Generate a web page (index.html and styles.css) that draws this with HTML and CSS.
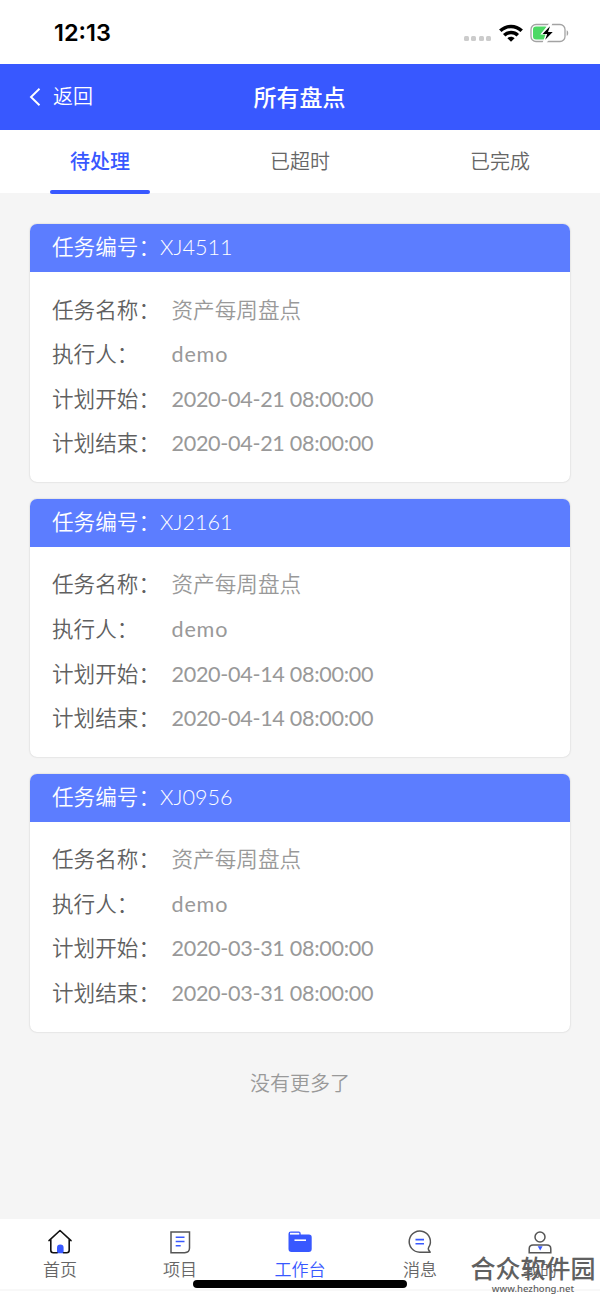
FILE: index.html
```html
<!DOCTYPE html>
<html lang="zh-CN">
<head>
    <meta charset="UTF-8">
    <meta name="viewport" content="width=device-width, initial-scale=1.0">
    <title>所有盘点</title>
    <link rel="stylesheet" href="styles.css">
</head>
<body>
    <div class="status-bar">
        <span class="time">12:13</span>
        <div class="status-icons">
            <div class="signal"><i></i><i></i><i></i><i></i></div>
            <svg class="wifi" width="24" height="18" viewBox="0 0 24 18">
                <g fill="none" stroke="#000" stroke-width="3.5">
                    <path d="M1.3 6.8C7.4.9 16.6.9 22.7 6.8"/>
                    <path d="M5.2 11.3C9 7.6 15 7.6 18.8 11.3"/>
                </g>
                <path d="M8.4 14.2C10.4 12.2 13.6 12.2 15.6 14.2L12 17.7z"/>
            </svg>
            <svg class="battery" width="39" height="20" viewBox="0 0 39 20">
                <rect x="1" y="1.5" width="34" height="17" rx="5" fill="#fff" stroke="#a3a3a3" stroke-width="1.3"/>
                <path d="M36.7 7.2c2 .7 2 4.9 0 5.6z" fill="#a3a3a3"/>
                <rect x="3" y="3.5" width="15" height="13" rx="3" fill="#4cd964"/>
                <path d="M19.5 0L10.3 11.5h5.2L12.5 20h4L25 8.3h-5.5L22.5 0z" fill="#fff"/>
                <path d="M20 3.3L12.5 11h4.7l-2 5.8L22.7 9H18z"/>
            </svg>
        </div>
    </div>

    <div class="header">
        <a class="back" href="#">
            <svg width="12" height="20" viewBox="0 0 12 20"><path d="M10.5 1.8L2 10l8.5 8.2" fill="none" stroke="#fff" stroke-width="1.9"/></svg>
            <span>返回</span>
        </a>
        <h1>所有盘点</h1>
    </div>

    <div class="tabs">
        <div class="tab active">待处理</div>
        <div class="tab">已超时</div>
        <div class="tab">已完成</div>
    </div>

    <div class="content">
        <div class="card">
            <div class="card-title">任务编号：<span class="code">XJ4511</span></div>
            <div class="card-body">
                <div class="row"><label>任务名称：</label><span>资产每周盘点</span></div>
                <div class="row"><label>执行人：</label><span class="demo">demo</span></div>
                <div class="row"><label>计划开始：</label><span class="date">2020-04-21 08:00:00</span></div>
                <div class="row"><label>计划结束：</label><span class="date">2020-04-21 08:00:00</span></div>
            </div>
        </div>
        <div class="card">
            <div class="card-title">任务编号：<span class="code">XJ2161</span></div>
            <div class="card-body">
                <div class="row"><label>任务名称：</label><span>资产每周盘点</span></div>
                <div class="row"><label>执行人：</label><span class="demo">demo</span></div>
                <div class="row"><label>计划开始：</label><span class="date">2020-04-14 08:00:00</span></div>
                <div class="row"><label>计划结束：</label><span class="date">2020-04-14 08:00:00</span></div>
            </div>
        </div>
        <div class="card">
            <div class="card-title">任务编号：<span class="code">XJ0956</span></div>
            <div class="card-body">
                <div class="row"><label>任务名称：</label><span>资产每周盘点</span></div>
                <div class="row"><label>执行人：</label><span class="demo">demo</span></div>
                <div class="row"><label>计划开始：</label><span class="date">2020-03-31 08:00:00</span></div>
                <div class="row"><label>计划结束：</label><span class="date">2020-03-31 08:00:00</span></div>
            </div>
        </div>
        <div class="no-more">没有更多了</div>
    </div>

    <div class="tabbar">
        <a class="item">
            <svg width="26" height="26" viewBox="0 0 26 26">
                <path d="M10 24.3v-5.5a3.3 3.3 0 0 1 6.6 0v5.5z" fill="#3858ff"/>
                <path d="M10 23.8H6.3q-2.5 0-2.5-2.5V10.5L2 11.6 13 1.5l11 10.1-1.8-1.1v10.8q0 2.5-2.5 2.5h-3.1" fill="none" stroke="#111" stroke-width="1.6" stroke-linecap="round" stroke-linejoin="round"/>
            </svg>
            <span>首页</span>
        </a>
        <a class="item">
            <svg width="26" height="26" viewBox="0 0 26 26">
                <path d="M4 2.9h18.5v16.2q0 4.6-4.8 4.6H4z" fill="none" stroke="#555" stroke-width="1.5"/>
                <path d="M8.7 8.2h8.8M8.7 12.5h8.8M8.7 16.7h5" stroke="#3858ff" stroke-width="1.5"/>
            </svg>
            <span>项目</span>
        </a>
        <a class="item active">
            <svg width="26" height="26" viewBox="0 0 26 26">
                <path d="M1.5 4.8q0-2.3 2.3-2.3h8q1.9 0 1.9 1.9v1.2h8.2q2.8 0 2.8 2.8v11.7q0 3-3 3H4.5q-3 0-3-3z" fill="#3858ff"/>
                <rect x="3" y="3.8" width="9.3" height="1.8" fill="#fff"/>
                <rect x="7.5" y="10.4" width="11.5" height="1.6" fill="#fff"/>
            </svg>
            <span>工作台</span>
        </a>
        <a class="item">
            <svg width="26" height="26" viewBox="0 0 26 26">
                <path d="M23.2 23.2H12.8A10.6 10.6 0 1 1 21.8 18.2q-.8 1.3-.3 2.6z" fill="none" stroke="#555" stroke-width="1.5" stroke-linejoin="round"/>
                <path d="M8.5 10.6h8.5M8.5 14.7h8.5" stroke="#3858ff" stroke-width="1.6"/>
            </svg>
            <span>消息</span>
        </a>
        <a class="item">
            <svg width="26" height="26" viewBox="0 0 26 26">
                <circle cx="13" cy="8" r="5" fill="none" stroke="#555" stroke-width="1.5"/>
                <path d="M2.2 23.7v-3.8q0-3.9 3.9-3.9h13.8q3.9 0 3.9 3.9v3.8z" fill="none" stroke="#555" stroke-width="1.5"/>
                <path d="M10.7 17.2h4.9l-2.4 4.2z" fill="#3858ff"/>
            </svg>
            <span>我的</span>
        </a>
        <div class="home-indicator"></div>
    </div>

    <div class="watermark">
        <div class="name">合众软件园</div>
        <div class="url">www.hezhong.net</div>
    </div>
</body>
</html>
```

FILE: styles.css
```css
* {
    box-sizing: border-box;
}
body {
    margin: 0;
    height: 1299px;
    display: flex;
    flex-direction: column;
    background: #f5f5f5;
    font-family: Lato, 'Noto Sans CJK SC', sans-serif;
    font-weight: 350;
    overflow: hidden;
}
.status-bar {
    height: 64px;
    flex: none;
    padding: 1px 31px 0 54px;
    display: flex;
    justify-content: space-between;
    align-items: center;
    background: #fff;
}
.time {
    font-family: Inter, sans-serif;
    font-size: 23.5px;
    font-weight: 600;
    color: #000;
}
.status-icons {
    display: flex;
    align-items: center;
}
.signal {
    display: flex;
    gap: 2.4px;
    margin: 11px 8px 0 0;
}
.signal i {
    width: 5px;
    height: 5px;
    border-radius: 1.5px;
    background: #ccc;
}
.wifi {
    margin-right: 7px;
}
.header {
    height: 65.5px;
    flex: none;
    display: grid;
    grid-template-columns: 1fr auto 1fr;
    align-items: center;
    padding: 0 1px 2px 0;
    background: #3858ff;
    color: #fff;
}
.back {
    display: flex;
    align-items: center;
    gap: 12px;
    padding-left: 29px;
    font-family: 'Noto Sans CJK SC', sans-serif;
    font-size: 20px;
    color: #fff;
    text-decoration: none;
}
.back svg {
    margin-top: 2px;
}
h1 {
    margin: 0;
    font-family: 'Noto Sans CJK SC', sans-serif;
    font-size: 23px;
    font-weight: 500;
}
.tabs {
    height: 63.5px;
    flex: none;
    display: flex;
    background: #fff;
}
.tab {
    flex: 1;
    position: relative;
    font-family: 'Noto Sans CJK SC', sans-serif;
    font-size: 20px;
    line-height: 62px;
    text-align: center;
    color: #666;
}
.tab.active {
    color: #3858ff;
    font-weight: 500;
}
.tab.active::after {
    content: "";
    position: absolute;
    left: 50px;
    right: 50px;
    bottom: -1px;
    height: 4px;
    border-radius: 2px;
    background: #3858ff;
}
.content {
    flex: 1;
    padding: 31.2px 30px 0;
}
.card {
    height: 258px;
    margin-bottom: 16.8px;
    background: #fff;
    border-radius: 7px;
    box-shadow: 0 0 2px rgba(0, 0, 0, 0.2);
    overflow: hidden;
    font-size: 21.6px;
}
.card-title {
    height: 48px;
    padding-left: 22px;
    line-height: 47px;
    background: #5c7dff;
    color: #fff;
}
.card-body {
    padding: 15.5px 22px;
}
.row {
    display: flex;
    height: 44.6px;
    line-height: 44.6px;
    color: #999;
}
.row label {
    width: 119.5px;
    white-space: nowrap;
    color: #606060;
}
.demo, .date {
    font-weight: 400;
}
.demo {
    letter-spacing: 0.8px;
}
.date {
    letter-spacing: -0.32px;
}
.no-more {
    margin-top: 36px;
    font-size: 20px;
    line-height: 30px;
    text-align: center;
    color: #999;
}
.tabbar {
    position: relative;
    height: 80.5px;
    flex: none;
    display: flex;
    background: #fff;
}
.item {
    flex: 1;
    display: flex;
    flex-direction: column;
    align-items: center;
    padding-top: 10px;
    font-family: 'Noto Sans CJK SC', sans-serif;
    font-size: 17px;
    line-height: 28px;
    color: #666;
}
.item.active {
    color: #3858ff;
}
.tabbar::after {
    content: "";
    position: absolute;
    left: 0;
    right: 0;
    bottom: 8px;
    height: 2px;
    background: #f8f8f8;
}
.home-indicator {
    position: absolute;
    z-index: 1;
    left: 193px;
    bottom: 11.5px;
    width: 214px;
    height: 7.5px;
    border-radius: 4px;
    background: #000;
}
.watermark {
    position: absolute;
    z-index: 2;
    left: 470px;
    top: 1250px;
    width: 126px;
    text-align: center;
    color: #606060;
}
.watermark .name {
    font-family: 'Noto Sans CJK SC', sans-serif;
    font-size: 25px;
    font-weight: 500;
    line-height: 34px;
    white-space: nowrap;
}
.watermark .url {
    font-family: 'Noto Sans', sans-serif;
    font-size: 9.5px;
    font-weight: 500;
    line-height: 10px;
}
```
